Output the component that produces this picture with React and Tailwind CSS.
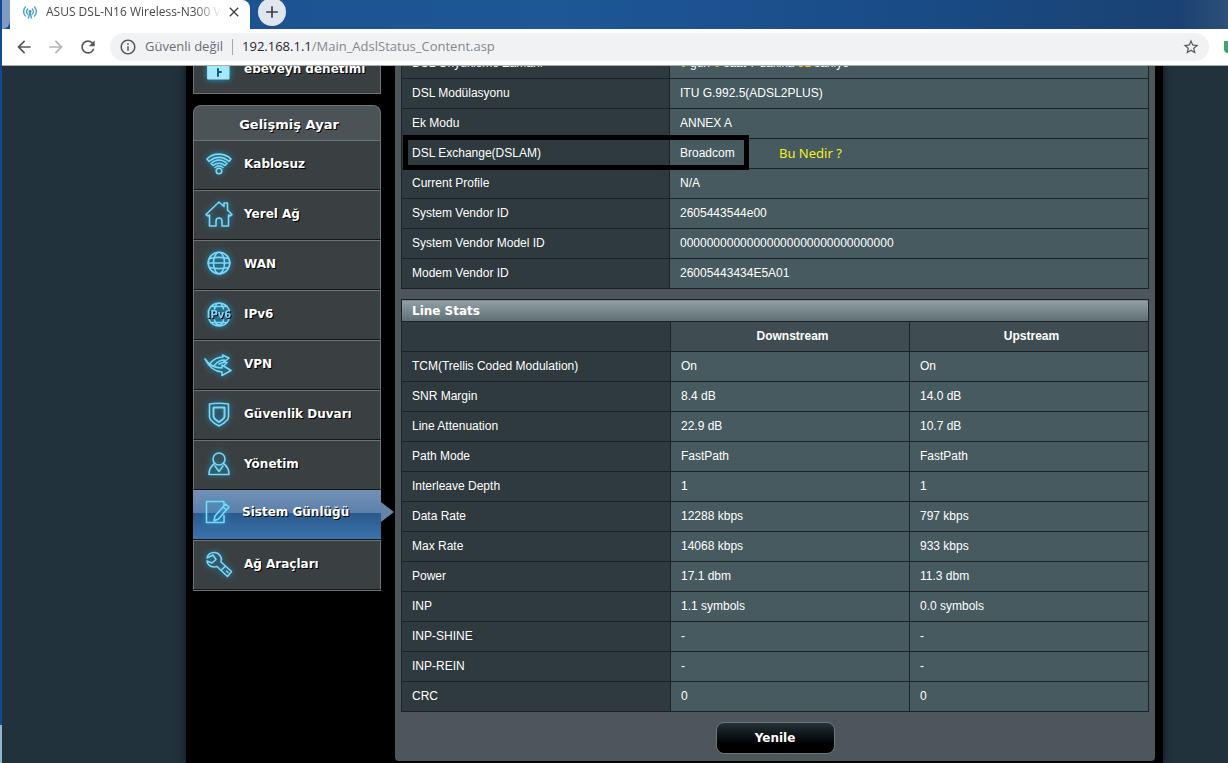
import React from "react";
import {
  MdAdd, MdArrowBack, MdArrowForward, MdClose,
  MdInfoOutline, MdRefresh, MdStarBorder,
} from "react-icons/md";

const svgProps = {
  viewBox: "0 0 30 30",
  className: "h-[30px] w-[30px] shrink-0 drop-shadow-[0_0_3px_#14a5d8]",
  fill: "none",
  stroke: "#7fd6f7",
  strokeWidth: 1.6,
  strokeLinejoin: "round",
  strokeLinecap: "round",
  "aria-hidden": true,
};

const ParentalIcon = () => (
  <svg {...svgProps}>
    <path d="M10 12V8a5 5 0 0 1 10 0v4" />
    <rect x="4" y="11" width="21" height="14" fill="#a5e8fb" stroke="#a5e8fb" strokeWidth="1" />
    <path d="M14 15v7M14 18h3" stroke="#1d5a70" strokeWidth="2" />
  </svg>
);

const WifiIcon = () => (
  <svg {...svgProps}>
    <path d="M3 10C9 3.500 20 3.500 27 10l-2 2.500C19 7 11 7 5 12.500z" />
    <path d="M7 14.500c5-4.500 11-4.500 16 0l-2 2c-4-3-8-3-12 0z" />
    <path d="M11 18.500c2.500-2 5.500-2 8 0" />
    <circle cx="15" cy="22" r="2.800" />
  </svg>
);

const HomeIcon = () => (
  <svg {...svgProps}>
    <path d="M2 15.500 15 3l5 4.500V4h3.500v7L28 15.500l-2 1.500-1.500-1V27H18v-5c0-4-6-4-6 0v5H5.500V16L4 17z" />
  </svg>
);

const GlobeIcon = () => (
  <svg {...svgProps}>
    <circle cx="15" cy="14" r="10.800" />
    <ellipse cx="15" cy="14" rx="5.500" ry="10.800" />
    <path d="M4 14h22M6 9.500c6-1.500 12-1.500 18 0M6 18.500c6 1.500 12 1.500 18 0" />
  </svg>
);

const Ipv6Icon = () => (
  <svg {...svgProps}>
    <path d="M5 10.500a11 11 0 0 1 20 0M5 20.500a11 11 0 0 0 20 0M10.500 10c.8-3 2.500-6 4.500-6s3.700 3 4.500 6M10.500 21c.8 3 2.500 5 4.500 5s3.700-2 4.500-5M7 7.500h16M7 23.500h16" />
    <text
      x="15"
      y="19"
      textAnchor="middle"
      fontSize="10"
      fontWeight="bold"
      fill="#7fd6f7"
      stroke="none"
      fontFamily="DejaVu Sans, sans-serif"
    >
      IPv6
    </text>
  </svg>
);

const VpnIcon = () => (
  <svg {...svgProps}>
    <path d="M1 10c4 6 10 9 17 9v-3l9 5.500-9 5v-3.500C10 22.500 5 18 1 10z" />
    <path d="M6 14.500c4-5 8-6.500 13-6.500l-.5-2 6.500 3-5 4 .3-2c-4 0-7 1.500-10 5.500M15 15c3-2 5-2 8-1.500l-3 3" />
  </svg>
);

const ShieldIcon = () => (
  <svg {...svgProps}>
    <path d="M5.500 5C12 4 18 4 24.500 5v13c0 4-5 6.500-9.500 9-4.500-2.500-9.500-5-9.500-9z" />
    <path d="M9.500 8.500h11v9c0 2-2.500 3.500-5.500 5.500-3-2-5.500-3.500-5.500-5.500z" strokeWidth="2" />
  </svg>
);

const UserIcon = () => (
  <svg {...svgProps}>
    <circle cx="15" cy="10" r="6" />
    <path d="M10.500 14.500C7 17 5 20 5 25.500h20c0-5.500-2-8.500-5.500-11M11 17l4 5.500 4-5.500" />
  </svg>
);

const LogIcon = () => (
  <svg {...svgProps}>
    <path d="M21 8V4.500H3.500v21H21v-7" />
    <path d="m12 19 10.500-12 3.500 3-10.500 12L11 24zM20 10l3.500 3" />
  </svg>
);

const WrenchIcon = () => (
  <svg {...svgProps}>
    <path d="M3 9c0-3 4-6 8-5.500 4.500.5 7.500 5 6 9.500l10.500 9.500-4 5L13 17.500c-5 1.500-9.500-1-10-5.500l5 2 4-3.500-3-4.500zM17.500 21l4-4M22.500 22l1.500 1.500" />
  </svg>
);

const menuItems = [
  { name: "Kablosuz", icon: WifiIcon },
  { name: "Yerel Ağ", icon: HomeIcon },
  { name: "WAN", icon: GlobeIcon },
  { name: "IPv6", icon: Ipv6Icon },
  { name: "VPN", icon: VpnIcon },
  { name: "Güvenlik Duvarı", icon: ShieldIcon },
  { name: "Yönetim", icon: UserIcon },
  { name: "Sistem Günlüğü", icon: LogIcon, active: true },
  { name: "Ağ Araçları", icon: WrenchIcon },
];

const Num = ({ children }) => <span className="text-[#ffcc00]">{children}</span>;

const dslInfo = [
  [
    "DSL Önyükleme Zamanı",
    <>
      <Num>0</Num> gün <Num>0</Num> saat 7 dakika <Num>51</Num> saniye
    </>,
  ],
  ["DSL Modülasyonu", "ITU G.992.5(ADSL2PLUS)"],
  ["Ek Modu", "ANNEX A"],
  ["DSL Exchange(DSLAM)", "Broadcom"],
  ["Current Profile", "N/A"],
  ["System Vendor ID", "2605443544e00"],
  ["System Vendor Model ID", "00000000000000000000000000000000"],
  ["Modem Vendor ID", "26005443434E5A01"],
];

const lineStats = [
  ["TCM(Trellis Coded Modulation)", "On", "On"],
  ["SNR Margin", "8.4 dB", "14.0 dB"],
  ["Line Attenuation", "22.9 dB", "10.7 dB"],
  ["Path Mode", "FastPath", "FastPath"],
  ["Interleave Depth", "1", "1"],
  ["Data Rate", "12288 kbps", "797 kbps"],
  ["Max Rate", "14068 kbps", "933 kbps"],
  ["Power", "17.1 dbm", "11.3 dbm"],
  ["INP", "1.1 symbols", "0.0 symbols"],
  ["INP-SHINE", "-", "-"],
  ["INP-REIN", "-", "-"],
  ["CRC", "0", "0"],
];

const tableClass = "w-full table-fixed border-collapse text-xs text-white";
const labelClass = "h-[30px] border border-[#1a2226] bg-[#2f3a3e] px-[10px] pb-0.5 text-left font-normal";
const valueClass = "h-[30px] border border-[#1a2226] bg-[#475a5f] px-[10px] pb-0.5";
const columnClass = "h-[30px] border border-[#1a2226] bg-[#3f4d52] pb-0.5 pl-[5px] text-center font-bold";

const BrowserBar = () => (
  <header className="shrink-0 font-['Open_Sans',sans-serif]">
    <div className="flex h-[29px] items-start bg-[linear-gradient(90deg,#1c4f8f,#1d5796_45%,#194b86_75%,#1a4272_96%,#2d4f78)]">
      <div className="h-[29px] w-2 shrink-0 rounded-br-lg bg-[#7f9cc4]" />
      <div className="flex h-[29px] w-[240px] shrink-0 items-center rounded-tr-lg bg-white pb-[5px] pl-3 pr-2">
        <svg viewBox="0 0 16 16" className="h-4 w-4 shrink-0" fill="none" stroke="#4aa5bf" strokeWidth="1.400" strokeLinecap="round" aria-hidden="true">
          <path d="M3.500 3C1 5.500 1 9.500 3.500 12M12.500 3c2.500 2.500 2.500 6.500 0 9M5.700 5c-1.500 1.500-1.500 3.500 0 5M10.300 5c1.500 1.500 1.500 3.500 0 5M8 8l-1.500 6M8 8l1.500 6" />
          <circle cx="8" cy="7.500" r="1" fill="#4aa5bf" />
        </svg>
        <span className="ml-2 w-[176px] overflow-hidden whitespace-nowrap text-xs text-[#45494d] [mask-image:linear-gradient(90deg,#000_84%,transparent)]">
          ASUS DSL-N16 Wireless-N300 VDSL
        </span>
        <button type="button" aria-label="Close tab" className="ml-1 text-[#3c4043]">
          <MdClose className="h-4 w-4" />
        </button>
      </div>
      <button type="button" aria-label="New tab" className="-mt-[2px] ml-2 flex h-7 w-7 items-center justify-center rounded-full bg-[#dfe6f0] text-[#3c4043]">
        <MdAdd className="h-5 w-5" />
      </button>
    </div>
    <div className="flex h-[37px] items-center border-b border-[#a9adb0] bg-white pl-3">
      <button type="button" aria-label="Back" className="text-[#55585c]">
        <MdArrowBack className="h-5 w-5" />
      </button>
      <button type="button" aria-label="Forward" className="ml-3 text-[#b4b6b9]">
        <MdArrowForward className="h-5 w-5" />
      </button>
      <button type="button" aria-label="Reload" className="ml-3 text-[#55585c]">
        <MdRefresh className="h-5 w-5" />
      </button>
      <div className="ml-3 flex h-7 min-w-0 flex-1 items-center rounded-full bg-[#f1f2f4] px-[9px] text-[13px]">
        <MdInfoOutline className="h-[18px] w-[18px] shrink-0 text-[#55585c]" />
        <span className="ml-2 whitespace-nowrap text-[#6a6e73]">Güvenli değil</span>
        <span className="mx-[9px] h-4 w-px bg-[#a5a8ac]" />
        <span className="flex-1 whitespace-nowrap text-[#84888d]">
          <span className="text-[#25282b]">192.168.1.1</span>/Main_AdslStatus_Content.asp
        </span>
        <button type="button" aria-label="Bookmark" className="text-[#55585c]">
          <MdStarBorder className="h-[18px] w-[18px]" />
        </button>
      </div>
      <div className="ml-[15px] h-3 w-1 rounded-bl-full bg-[#3fa66a]" />
    </div>
  </header>
);

const MenuItem = ({ name, icon: Icon, active }) => (
  <li>
    <a
      href="#"
      className={
        active
          ? "relative flex h-[50px] items-center gap-[9px] border-b border-[#121718] bg-[linear-gradient(#7391b5,#5c80ab_46%,#2b5a8c_48%,#3b73ad)] pb-1.5 pl-[10px] after:absolute after:left-full after:top-[12px] after:h-5 after:w-[13px] after:bg-[#6383a8] after:[clip-path:polygon(0_0,100%_50%,0_100%)]"
          : "flex h-[50px] items-center gap-[10px] border border-[#6b7375] border-b-[#121718] bg-[#3a3f41] pb-0.5 pl-[10px]"
      }
    >
      <Icon />
      {name}
    </a>
  </li>
);

const Sidebar = () => (
  <nav className="w-[188px] shrink-0 font-['DejaVu_Sans',Verdana,sans-serif] text-xs font-bold text-white [text-shadow:1px_1px_0_#000]">
    <a href="#" className="flex h-[50px] items-center gap-[10px] border border-[#6b7375] bg-[#3a3f41] pl-[10px]">
      <ParentalIcon />
      ebeveyn denetimi
    </a>
    <h2 className="mt-[11px] flex h-[35px] items-center justify-center rounded-t-lg border border-b-0 border-[#6b7375] bg-[#4b5356] pl-1 pt-1 text-[13px]">
      Gelişmiş Ayar
    </h2>
    <ul className="border-b border-[#6b7375]">
      {menuItems.map((item) => (
        <MenuItem key={item.name} {...item} />
      ))}
    </ul>
  </nav>
);

const StatusPanel = () => (
  <main className="mt-1 min-w-0 flex-1 rounded-b bg-[#4d575b] px-[6px] font-['Liberation_Sans',Arial,sans-serif]">
    <div className="relative">
      <table className={tableClass}>
        <colgroup>
          <col className="w-[268px]" />
          <col />
        </colgroup>
        <tbody>
          {dslInfo.map(([label, value]) => (
            <tr key={label}>
              <th scope="row" className={labelClass}>{label}</th>
              <td className={valueClass}>{value}</td>
            </tr>
          ))}
        </tbody>
      </table>
      {/* Highlight drawn over the DSLAM row */}
      <div className="absolute left-[2px] top-[87px] h-[35px] w-[346px] border-[5px] border-black" />
      <p className="absolute left-[378px] top-[96px] font-['Noto_Sans',sans-serif] text-[13px] leading-[18px] text-[#f4f01e]">
        Bu Nedir ?
      </p>
    </div>

    <table className={`${tableClass} mt-[10px]`}>
      <colgroup>
        <col className="w-[269px]" />
        <col />
        <col />
      </colgroup>
      <thead>
        <tr>
          <th
            colSpan={3}
            className="h-[22px] border border-[#1a2226] bg-[linear-gradient(#92a0a5,#5f6e73)] px-[10px] text-left font-['DejaVu_Sans',Verdana,sans-serif] text-xs font-bold"
          >
            Line Stats
          </th>
        </tr>
        <tr>
          <td className={labelClass} />
          <th scope="col" className={columnClass}>Downstream</th>
          <th scope="col" className={columnClass}>Upstream</th>
        </tr>
      </thead>
      <tbody>
        {lineStats.map(([label, down, up]) => (
          <tr key={label}>
            <th scope="row" className={labelClass}>{label}</th>
            <td className={valueClass}>{down}</td>
            <td className={valueClass}>{up}</td>
          </tr>
        ))}
      </tbody>
    </table>

    <div className="flex justify-center pb-[7px] pt-[10px]">
      <button
        type="button"
        className="h-8 w-[119px] rounded-lg border border-[#6c7679] bg-[linear-gradient(#233238,#000_70%)] font-['DejaVu_Sans',Verdana,sans-serif] text-xs font-bold text-white"
      >
        Yenile
      </button>
    </div>
  </main>
);

export default function App() {
  return (
    <div className="flex min-h-screen flex-col bg-[linear-gradient(#114a94_95%,#8fb4cc_95%)] pl-0.5">
      <BrowserBar />
      <div className="flex flex-1 overflow-hidden bg-[#21323d] pl-[184px] pr-[65px]">
        {/* The page is scrolled a little, so its first row is cut by the toolbar */}
        <div className="-mt-[22px] flex min-w-0 flex-1 items-start gap-[14px] bg-black pb-[2px] pl-[7px] pr-2 shadow-[0_0_8px_#0b1216]">
          <Sidebar />
          <StatusPanel />
        </div>
      </div>
    </div>
  );
}
